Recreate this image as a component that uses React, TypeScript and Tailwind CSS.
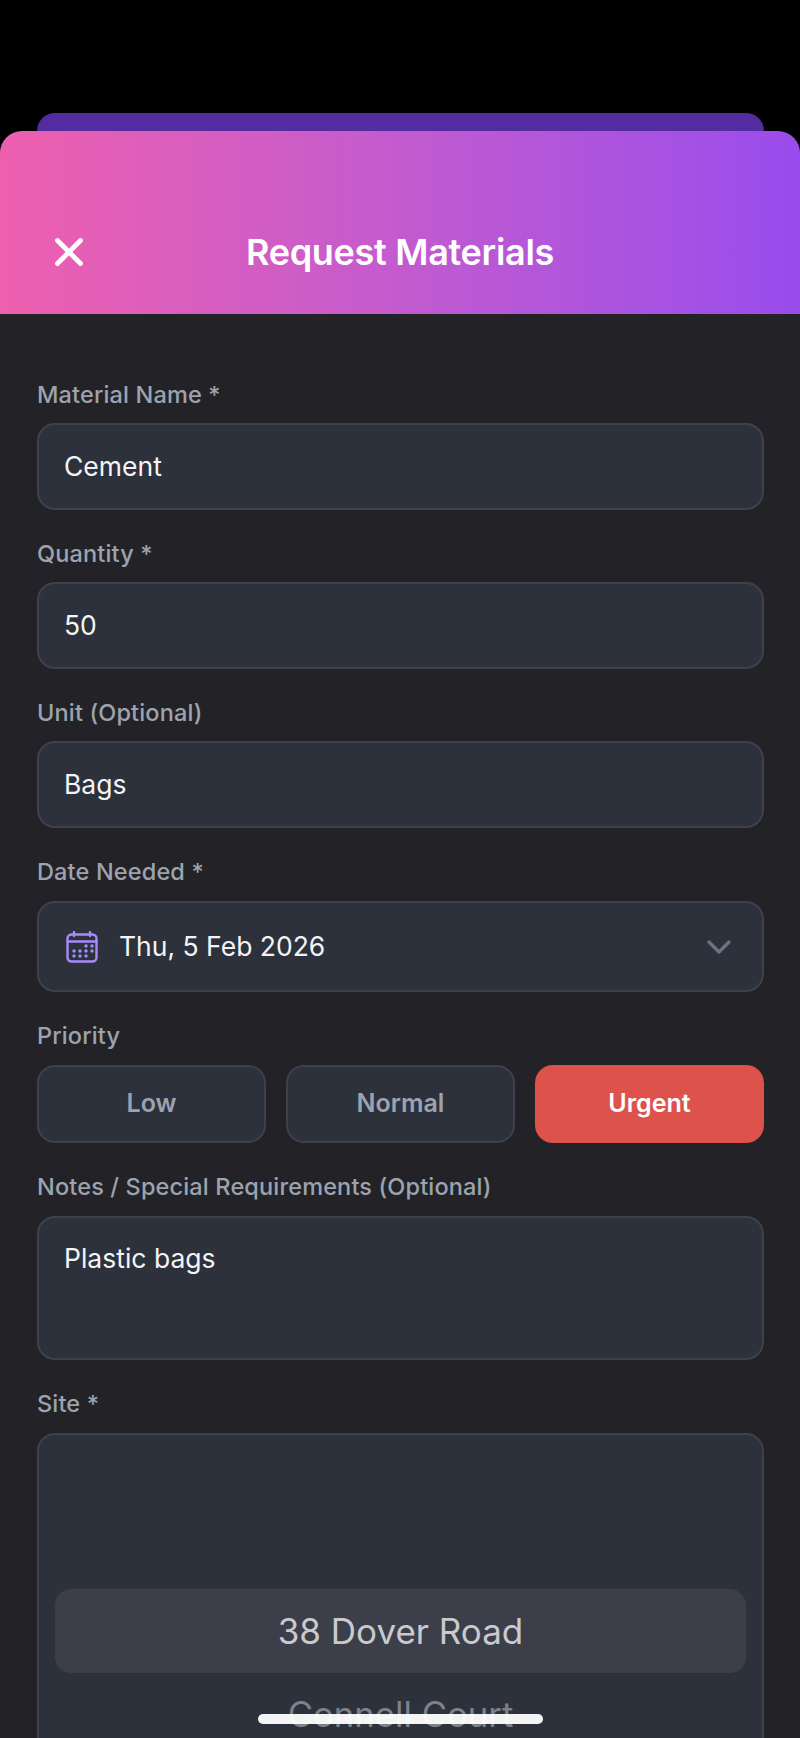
import { ChevronDown, X } from 'lucide-react';

const labelClass = 'h-[28px] text-[23.5px] leading-[28px] font-medium tracking-[0.15px] text-[#9ca3af]';

function Field({ label, value }: { label: string; value: string }) {
  return (
    <div className="flex flex-col gap-[14px]">
      <label className={labelClass}>{label}</label>
      <div className="flex h-[87px] items-center rounded-[18px] border-2 border-[#3e414c] bg-[#2d313c] pl-[25px] text-[26.5px] text-[#f3f4f6]">
        {value}
      </div>
    </div>
  );
}

function CalendarIcon() {
  return (
    <svg width="32" height="32" viewBox="0 0 32 32" fill="none" stroke="#a78bfa" strokeWidth="2.4" strokeLinecap="round">
      <rect x="1.5" y="3.5" width="29" height="27" rx="4" />
      <path d="M1.5 10.5h29M8 1v4M24 1v4" />
      <g fill="#a78bfa" stroke="none">
        <circle cx="20" cy="15" r="1.7" />
        <circle cx="26" cy="15" r="1.7" />
        <circle cx="8" cy="20" r="1.7" />
        <circle cx="14" cy="20" r="1.7" />
        <circle cx="20" cy="20" r="1.7" />
        <circle cx="26" cy="20" r="1.7" />
        <circle cx="8" cy="25" r="1.7" />
        <circle cx="14" cy="25" r="1.7" />
        <circle cx="20" cy="25" r="1.7" />
      </g>
    </svg>
  );
}

export default function App() {
  return (
    <div className="relative h-[1738px] overflow-hidden bg-black font-[Inter,sans-serif]">
      <div className="ml-[37px] mr-[36px] mt-[113px] h-[18px] rounded-t-[18px] bg-[#532da0]" />

      <div className="flex h-[183px] items-center justify-between rounded-t-[22px] bg-linear-to-r from-[#ee5fae] to-[#994bec] px-[42px] pt-[59px]">
        <button className="flex h-[54px] w-[54px] items-center justify-center text-white">
          <X size={46} strokeWidth={2.5} />
        </button>
        <h1 className="text-[36px] font-semibold tracking-[-0.3px] text-white">Request Materials</h1>
        <div className="w-[54px]" />
      </div>

      <div className="flex h-[1424px] flex-col gap-[30px] bg-[#232327] pl-[37px] pr-[36px] pt-[67px]">
        <Field label="Material Name *" value="Cement" />
        <Field label="Quantity *" value="50" />
        <Field label="Unit (Optional)" value="Bags" />

        <div className="flex flex-col gap-[15px]">
          <label className={labelClass}>Date Needed *</label>
          <div className="flex h-[91px] items-center rounded-[18px] border-2 border-[#3e414c] bg-[#2d313c] pl-[27px] pr-[26px] text-[26.5px] text-[#f3f4f6]">
            <CalendarIcon />
            <span className="ml-[21px]">Thu, 5 Feb 2026</span>
            <ChevronDown size={40} strokeWidth={2} className="ml-auto -mr-[3px] text-[#6b7280]" />
          </div>
        </div>

        <div className="flex flex-col gap-[15px]">
          <label className={labelClass}>Priority</label>
          <div className="grid grid-cols-3 gap-[20px]">
            <button className="h-[78px] rounded-[18px] border-2 border-[#3e414c] bg-[#2d313c] text-[25px] font-semibold text-[#9ca3af]">Low</button>
            <button className="h-[78px] rounded-[18px] border-2 border-[#3e414c] bg-[#2d313c] text-[25px] font-semibold text-[#9ca3af]">Normal</button>
            <button className="h-[78px] rounded-[18px] bg-[#dd524b] text-[25px] font-semibold text-white">Urgent</button>
          </div>
        </div>

        <div className="flex flex-col gap-[15px]">
          <label className={labelClass}>Notes / Special Requirements (Optional)</label>
          <div className="h-[144px] rounded-[18px] border-2 border-[#3e414c] bg-[#2d313c] pl-[25px] pt-[22px] text-[26.5px] leading-[36px] text-[#f3f4f6]">
            Plastic bags
          </div>
        </div>

        <div className="flex flex-col gap-[15px]">
          <label className={labelClass}>Site *</label>
          <div className="h-[400px] rounded-[18px] border-2 border-[#3e414c] bg-[#2d313c] px-[16px] pt-[154px]">
            <div className="flex h-[84px] items-center justify-center rounded-[16px] bg-[#3c3e4a] text-[35px] text-[#c9cacd]">38 Dover Road</div>
            <div className="mt-[-1px] flex h-[84px] items-center justify-center text-[34.7px] text-[#7f8188]">Connell Court</div>
          </div>
        </div>
      </div>

      <div className="absolute bottom-[14px] left-[258px] h-[10px] w-[285px] rounded-full bg-white/95" />
    </div>
  );
}
